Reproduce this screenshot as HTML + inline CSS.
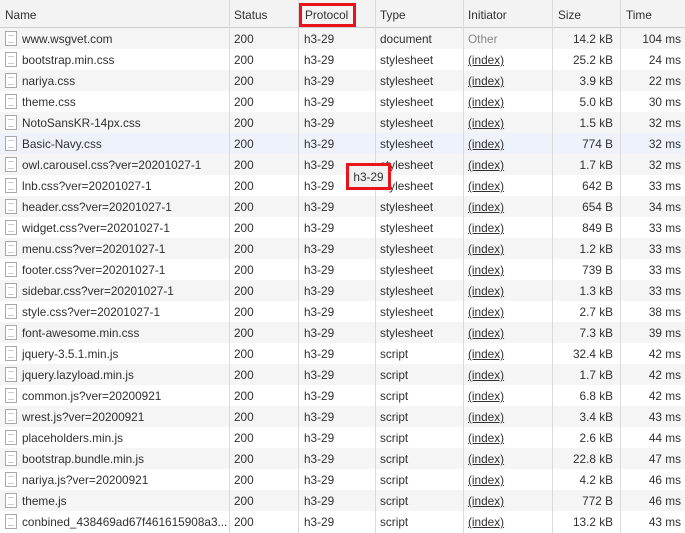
<!DOCTYPE html>
<html><head><style>
body{margin:0;width:685px;height:533px;overflow:hidden;background:#fff;font-family:"Liberation Sans",sans-serif;font-size:11.8px;color:#303030;position:relative}
.hd{position:absolute;left:0;top:0;width:685px;height:28px;background:#f3f3f3;border-bottom:1px solid #cdcdcd;box-sizing:border-box}
.r{position:absolute;left:0;width:685px;height:21px;line-height:22px}
.c{position:absolute;top:0;white-space:nowrap}
.vl{position:absolute;top:0;width:1px;height:533px;background:#dadada}
.ic{position:absolute;left:5px;top:3px;width:12px;height:15px;border:1px solid #a8a8a8;background:#fff;box-sizing:border-box}
.ic:after{content:"";position:absolute;left:2px;top:3px;width:6px;height:6px;border-top:1px solid #ccc;border-bottom:1px solid #ccc}
.u{text-decoration:underline}
.g{color:#888}
</style></head><body>
<div class="hd">
<span class="c" style="left:5px;top:8px">Name</span>
<span class="c" style="left:234px;top:8px">Status</span>
<span class="c" style="left:305px;top:8px">Protocol</span>
<span class="c" style="left:380px;top:8px">Type</span>
<span class="c" style="left:468px;top:8px">Initiator</span>
<span class="c" style="left:558px;top:8px">Size</span>
<span class="c" style="left:626px;top:8px">Time</span>
</div>
<div id="rows"></div>
<div class="vl" style="left:229px"></div><div class="vl" style="left:298px"></div><div class="vl" style="left:375px"></div><div class="vl" style="left:463px"></div><div class="vl" style="left:552px"></div><div class="vl" style="left:620px"></div>
<div style="position:absolute;left:299px;top:3px;width:57px;height:24px;border:3px solid #e8141c;box-sizing:border-box"></div>
<div style="position:absolute;left:346px;top:163px;width:45px;height:27px;border:3px solid #e8141c;box-sizing:border-box;background:#f0f0f0;text-align:center;line-height:22px">h3-29</div>
<script>
var d=[["www.wsgvet.com","document","Other","14.2 kB","104 ms"],["bootstrap.min.css","stylesheet","(index)","25.2 kB","24 ms"],["nariya.css","stylesheet","(index)","3.9 kB","22 ms"],["theme.css","stylesheet","(index)","5.0 kB","30 ms"],["NotoSansKR-14px.css","stylesheet","(index)","1.5 kB","32 ms"],["Basic-Navy.css","stylesheet","(index)","774 B","32 ms"],["owl.carousel.css?ver=20201027-1","stylesheet","(index)","1.7 kB","32 ms"],["lnb.css?ver=20201027-1","stylesheet","(index)","642 B","33 ms"],["header.css?ver=20201027-1","stylesheet","(index)","654 B","34 ms"],["widget.css?ver=20201027-1","stylesheet","(index)","849 B","33 ms"],["menu.css?ver=20201027-1","stylesheet","(index)","1.2 kB","33 ms"],["footer.css?ver=20201027-1","stylesheet","(index)","739 B","33 ms"],["sidebar.css?ver=20201027-1","stylesheet","(index)","1.3 kB","33 ms"],["style.css?ver=20201027-1","stylesheet","(index)","2.7 kB","38 ms"],["font-awesome.min.css","stylesheet","(index)","7.3 kB","39 ms"],["jquery-3.5.1.min.js","script","(index)","32.4 kB","42 ms"],["jquery.lazyload.min.js","script","(index)","1.7 kB","42 ms"],["common.js?ver=20200921","script","(index)","6.8 kB","42 ms"],["wrest.js?ver=20200921","script","(index)","3.4 kB","43 ms"],["placeholders.min.js","script","(index)","2.6 kB","44 ms"],["bootstrap.bundle.min.js","script","(index)","22.8 kB","47 ms"],["nariya.js?ver=20200921","script","(index)","4.2 kB","46 ms"],["theme.js","script","(index)","772 B","46 ms"],["conbined_438469ad67f461615908a3...","script","(index)","13.2 kB","43 ms"]];
var h='';d.forEach(function(r,i){var bg=i%2==0?'#f5f5f5':'#fff';if(i==5)bg='#eef3fb';
h+='<div class="r" style="top:'+(28+i*21)+'px;background:'+bg+'"><span class="ic"></span><span class="c" style="left:22px">'+r[0]+'</span><span class="c" style="left:234px">200</span><span class="c" style="left:304px">h3-29</span><span class="c" style="left:380px">'+r[1]+'</span><span class="c '+(r[2]=='Other'?'g':'u')+'" style="left:468px">'+r[2]+'</span><span class="c" style="right:72px">'+r[3]+'</span><span class="c" style="right:4px">'+r[4]+'</span></div>';});
document.getElementById('rows').innerHTML=h;
</script>
</body></html>
